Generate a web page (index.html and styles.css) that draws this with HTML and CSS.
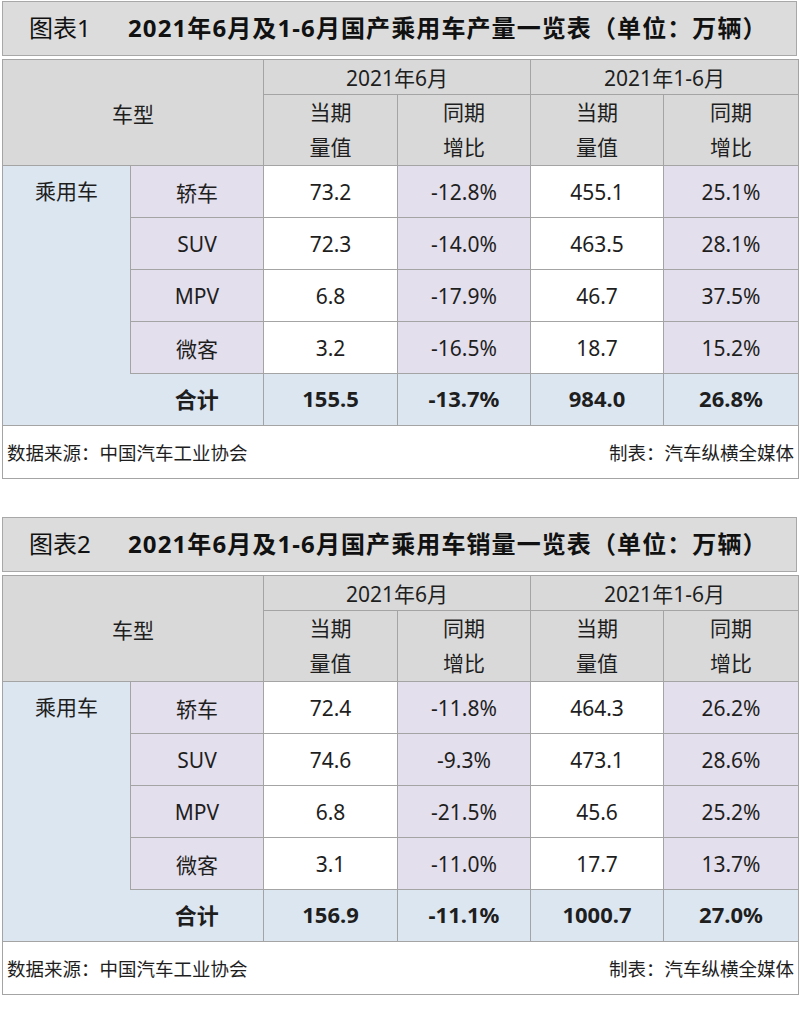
FILE: index.html
```html
<!DOCTYPE html>
<html lang="zh-CN">
<head>
<meta charset="utf-8">
<title>2021年6月及1-6月国产乘用车产销量</title>
<link rel="stylesheet" href="styles.css">
</head>
<body>
<div class="page">
  <section class="chart">
    <div class="title"><span class="label">图表1</span><span class="heading">2021年6月及1-6月国产乘用车产量一览表（单位：万辆）</span></div>
    <table class="grid">
      <colgroup><col class="c1"><col class="c2"><col class="c3"><col class="c4"><col class="c5"><col class="c6"></colgroup>
      <tr class="h1"><th colspan="2" rowspan="2">车型</th><th colspan="2">2021年6月</th><th colspan="2">2021年1-6月</th></tr>
      <tr class="h2"><th>当期<br>量值</th><th>同期<br>增比</th><th>当期<br>量值</th><th>同期<br>增比</th></tr>
      <tr class="row"><td rowspan="5" class="cat">乘用车</td><td class="model">轿车</td><td class="val">73.2</td><td class="pct">-12.8%</td><td class="val">455.1</td><td class="pct">25.1%</td></tr>
      <tr class="row"><td class="model">SUV</td><td class="val">72.3</td><td class="pct">-14.0%</td><td class="val">463.5</td><td class="pct">28.1%</td></tr>
      <tr class="row"><td class="model">MPV</td><td class="val">6.8</td><td class="pct">-17.9%</td><td class="val">46.7</td><td class="pct">37.5%</td></tr>
      <tr class="row"><td class="model">微客</td><td class="val">3.2</td><td class="pct">-16.5%</td><td class="val">18.7</td><td class="pct">15.2%</td></tr>
      <tr class="row total"><td class="sum-label">合计</td><td>155.5</td><td>-13.7%</td><td>984.0</td><td>26.8%</td></tr>
      <tr class="foot"><td colspan="6"><div class="foot-inner"><span>数据来源：中国汽车工业协会</span><span>制表：汽车纵横全媒体</span></div></td></tr>
    </table>
  </section>
  <section class="chart">
    <div class="title"><span class="label">图表2</span><span class="heading">2021年6月及1-6月国产乘用车销量一览表（单位：万辆）</span></div>
    <table class="grid">
      <colgroup><col class="c1"><col class="c2"><col class="c3"><col class="c4"><col class="c5"><col class="c6"></colgroup>
      <tr class="h1"><th colspan="2" rowspan="2">车型</th><th colspan="2">2021年6月</th><th colspan="2">2021年1-6月</th></tr>
      <tr class="h2"><th>当期<br>量值</th><th>同期<br>增比</th><th>当期<br>量值</th><th>同期<br>增比</th></tr>
      <tr class="row"><td rowspan="5" class="cat">乘用车</td><td class="model">轿车</td><td class="val">72.4</td><td class="pct">-11.8%</td><td class="val">464.3</td><td class="pct">26.2%</td></tr>
      <tr class="row"><td class="model">SUV</td><td class="val">74.6</td><td class="pct">-9.3%</td><td class="val">473.1</td><td class="pct">28.6%</td></tr>
      <tr class="row"><td class="model">MPV</td><td class="val">6.8</td><td class="pct">-21.5%</td><td class="val">45.6</td><td class="pct">25.2%</td></tr>
      <tr class="row"><td class="model">微客</td><td class="val">3.1</td><td class="pct">-11.0%</td><td class="val">17.7</td><td class="pct">13.7%</td></tr>
      <tr class="row total"><td class="sum-label">合计</td><td>156.9</td><td>-11.1%</td><td>1000.7</td><td>27.0%</td></tr>
      <tr class="foot"><td colspan="6"><div class="foot-inner"><span>数据来源：中国汽车工业协会</span><span>制表：汽车纵横全媒体</span></div></td></tr>
    </table>
  </section>
</div>
</body>
</html>
```

FILE: styles.css
```css
* { box-sizing: border-box; }

body {
  margin: 0;
  background: #ffffff;
  font-family: "Noto Sans", "Noto Sans CJK SC", sans-serif;
  color: #1e1e1e;
}

.page {
  padding: 1px 3px 0 2px;
  display: flex;
  flex-direction: column;
  gap: 38px;
}

.chart {
  display: flex;
  flex-direction: column;
  gap: 3px;
}

.title {
  height: 55px;
  background: #dcdcdc;
  border: 1px solid #a8a8a8;
  display: flex;
  align-items: center;
  padding: 0 0 5px 26px;
  font-size: 24px;
  color: #111;
}

.title .label {
  font-weight: 400;
  width: 99px;
}

.title .heading {
  font-weight: 700;
  letter-spacing: 1.1px;
}

.grid {
  width: 796px;
  border-collapse: collapse;
  table-layout: fixed;
  font-size: 21px;
}

.c1 { width: 128px; }
.c2 { width: 133px; }
.c3 { width: 134px; }
.c4 { width: 133px; }
.c5 { width: 133px; }
.c6 { width: 135px; }

.grid th,
.grid td {
  border: 1px solid #a4a4a4;
  padding: 0;
  text-align: center;
  font-weight: 400;
}

.grid th {
  background: #d9d9d9;
}

.h1 th { height: 35px; }

.h2 th {
  height: 69px;
  line-height: 35px;
}

.row td { height: 52px; }

.cat {
  background: #dce6f1;
  vertical-align: top;
  line-height: 51px;
}

.model { background: #e4dfec; }
.val { background: #ffffff; }
.pct { background: #e4dfec; }

.total td {
  background: #dce6f1;
  font-weight: 700;
  font-size: 22px;
  padding-bottom: 3px;
}

.total .sum-label { border-left-style: hidden; }

.foot td {
  height: 53px;
  background: #ffffff;
  font-size: 18.5px;
}

.foot-inner {
  display: flex;
  justify-content: space-between;
  padding: 0 4px 0 4px;
}
```
